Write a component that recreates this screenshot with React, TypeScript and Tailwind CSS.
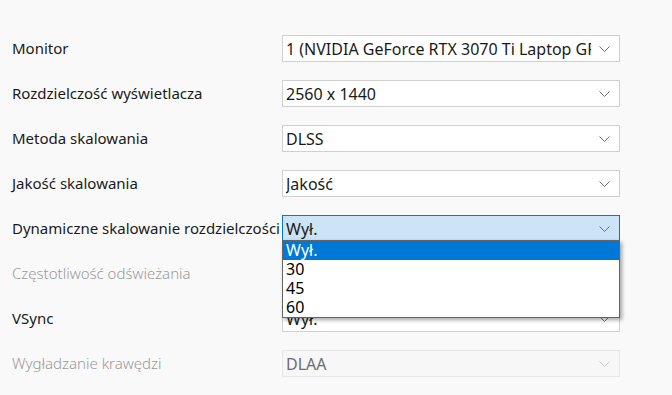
import React from 'react';

interface Row {
  label: string;
  value: string;
  disabled?: boolean;
  focused?: boolean;
}

const rows: Row[] = [
  { label: 'Monitor', value: '1 (NVIDIA GeForce RTX 3070 Ti Laptop GPU)' },
  { label: 'Rozdzielczość wyświetlacza', value: '2560 x 1440' },
  { label: 'Metoda skalowania', value: 'DLSS' },
  { label: 'Jakość skalowania', value: 'Jakość' },
  { label: 'Dynamiczne skalowanie rozdzielczości', value: 'Wył.', focused: true },
  { label: 'Częstotliwość odświeżania', value: '', disabled: true },
  { label: 'VSync', value: 'Wył.' },
  { label: 'Wygładzanie krawędzi', value: 'DLAA', disabled: true },
];

const options = ['Wył.', '30', '45', '60'];

const Chevron: React.FC<{ color: string }> = ({ color }) => (
  <svg width="11" height="6" viewBox="0 0 11 6" className="shrink-0">
    <path d="M0.5 0.5 L5.5 5.5 L10.5 0.5" fill="none" stroke={color} strokeWidth="1" />
  </svg>
);

const Combo: React.FC<{ row: Row }> = ({ row }) => {
  let box = 'border-[#d0d0d0] bg-white text-[#1a1a1a]';
  if (row.focused) box = 'border-[#0078d7] bg-[#cce4f7] text-[#1a1a1a]';
  if (row.disabled) box = 'border-[#e6e6e6] bg-[#f7f7f7] text-[#6d6d6d]';
  return (
    <div className={`flex h-[27px] w-[338px] items-center border pl-[3px] pr-[9px] text-[16px] ${box}`}>
      <span className="flex-1 overflow-hidden whitespace-nowrap mr-[8px]">{row.value}</span>
      <Chevron color={row.disabled ? '#c8c8c8' : '#707070'} />
    </div>
  );
};

const App: React.FC = () => {
  return (
    <div
      className="relative h-[395px] w-[672px] overflow-hidden bg-[#f9f9f9] text-[15px]"
      style={{ fontFamily: '"Noto Sans", "Open Sans", sans-serif' }}
    >
      <div className="flex flex-col gap-[18px] pt-[35px]">
        {rows.map((row) => (
          <div key={row.label} className="flex items-center">
            <div
              className={`w-[282px] pl-[12px] whitespace-nowrap ${
                row.disabled ? 'text-[#9a9a9a] font-light' : 'text-[#1a1a1a]'
              }`}
            >
              {row.label}
            </div>
            <Combo row={row} />
          </div>
        ))}
      </div>

      <div className="absolute left-[282px] top-[240px] w-[338px] border border-[#646464] bg-white shadow-[2px_2px_4px_rgba(0,0,0,0.35)]">
        {options.map((o, i) => (
          <div
            key={o}
            className={`h-[19px] pl-[3px] text-[16px] leading-[19px] ${
              i === 0 ? 'bg-[#0078d7] text-white' : 'text-black'
            }`}
          >
            {o}
          </div>
        ))}
      </div>
    </div>
  );
};

export default App;
